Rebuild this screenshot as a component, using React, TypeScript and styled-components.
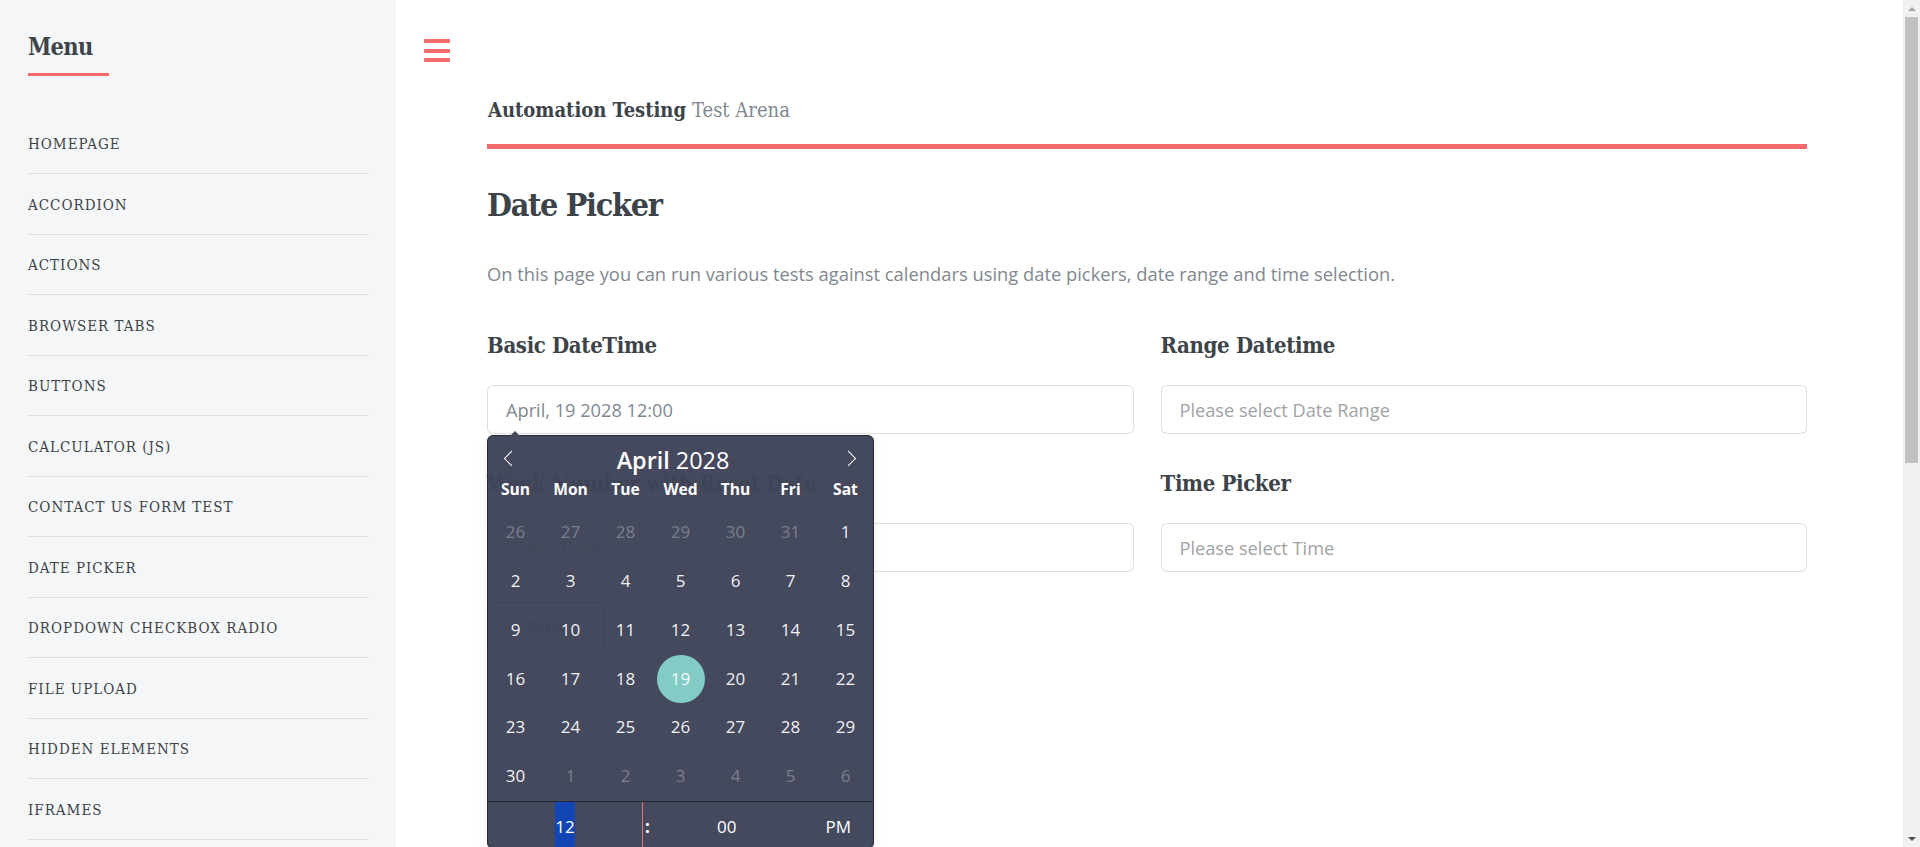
import React from "react";
import styled, { createGlobalStyle } from "styled-components";

const HEAD = `"DejaVu Serif Condensed", "DejaVu Serif", "Liberation Serif", serif`;
const BODY = `"Open Sans", "Noto Sans", sans-serif`;
const ACCENT = "#f56a6a";
const INK = "#3d4449";

const GlobalStyle = createGlobalStyle`
  * { box-sizing: border-box; }
  html, body { margin: 0; padding: 0; height: 100%; overflow: hidden; background: #ffffff; }
  body { font-family: ${BODY}; font-size: 18.2px; color: #7f888f; }
  #root { height: 100%; }
`;

const Page = styled.div`
  display: flex;
  width: 1920px;
  height: 847px;
  overflow: hidden;
`;

const Sidebar = styled.aside`
  flex: none;
  width: 396px;
  height: 100%;
  background: #f5f6f7;
  padding: 33px 27px 0 28px;
  overflow: hidden;
`;

const MenuTitle = styled.h2`
  display: inline-block;
  margin: 0 0 37px;
  padding: 0 16px 12px 0;
  border-bottom: 3px solid ${ACCENT};
  font-family: ${HEAD};
  font-stretch: condensed;
  font-weight: 700;
  font-size: 23.4px;
  letter-spacing: -0.7px;
  line-height: 28px;
  color: ${INK};
`;

const MenuList = styled.ul`
  list-style: none;
  margin: 0;
  padding: 0;
`;

const MenuItem = styled.li`
  height: 60px;
  display: flex;
  align-items: center;
  padding-top: 2px;
  font-family: ${HEAD};
  font-stretch: condensed;
  font-size: 15px;
  letter-spacing: 1px;
  text-transform: uppercase;
  color: ${INK};
  & + & {
    border-top: 1px solid rgba(210, 215, 217, 0.75);
    height: 60.5px;
  }
`;

const Main = styled.main`
  flex: 1;
  min-width: 0;
  padding: 39px 0 0 28px;
`;

const Toggle = styled.div`
  width: 26px;
  height: 23px;
  display: flex;
  flex-direction: column;
  justify-content: space-between;
`;

const ToggleBar = styled.span`
  display: block;
  height: 4px;
  border-radius: 1px;
  background: ${ACCENT};
`;

const Content = styled.div`
  width: 1320px;
  margin-left: 63px;
`;

const Header = styled.header`
  padding: 36px 0 22px 1px;
  border-bottom: 5px solid ${ACCENT};
`;

const Logo = styled.div`
  font-family: ${HEAD};
  font-stretch: condensed;
  font-size: 20px;
  line-height: 24px;
  color: #7f888f;
  strong {
    color: ${INK};
    font-weight: 700;
    margin-right: 6px;
  }
`;

const Title = styled.h1`
  margin: 36px 0 0;
  font-family: ${HEAD};
  font-stretch: condensed;
  font-weight: 700;
  font-size: 32px;
  letter-spacing: -1.3px;
  line-height: 40px;
  color: ${INK};
`;

const Lead = styled.p`
  margin: 34.6px 0 0;
  font-size: 18.35px;
  line-height: 28.6px;
`;

const Grid = styled.div`
  display: grid;
  grid-template-columns: 1fr 1fr;
  column-gap: 27px;
  margin-top: 43px;
`;

const Field = styled.div`
  padding-bottom: 35px;
`;

const FieldLabel = styled.h3`
  margin: 0 0 26px;
  font-family: ${HEAD};
  font-stretch: condensed;
  font-weight: 700;
  font-size: 22px;
  letter-spacing: -0.35px;
  line-height: 28px;
  color: ${INK};
`;

const InputWrap = styled.div`
  position: relative;
`;

const Input = styled.input`
  display: block;
  width: 100%;
  height: 49px;
  padding: 0 18px;
  border: 1px solid rgba(210, 215, 217, 0.75);
  border-radius: 6px;
  background: #ffffff;
  font-family: ${BODY};
  font-size: 18.2px;
  color: #7f888f;
  outline: none;
  &::placeholder {
    color: #9fa3a6;
  }
`;

const ResetButton = styled.div`
  display: inline-flex;
  align-items: center;
  justify-content: center;
  margin-top: 30px;
  width: 118px;
  height: 50px;
  border: 1px solid ${INK};
  border-radius: 6px;
  font-family: ${HEAD};
  font-size: 15px;
  color: ${INK};
`;

/* ---------- calendar ---------- */

const Calendar = styled.div`
  position: absolute;
  top: calc(100% + 2px);
  left: 1px;
  z-index: 10;
  width: 385px;
  background: #3f4458;
  border-radius: 5px;
  opacity: 0.97;
  box-shadow: 1px 0 0 #20222c, -1px 0 0 #20222c, 0 1px 0 #20222c, 0 -1px 0 #20222c,
    0 3px 13px rgba(0, 0, 0, 0.08);
  font-family: ${BODY};
  color: #ffffff;
  &::before {
    content: "";
    position: absolute;
    left: 22px;
    top: -10px;
    border: 5px solid transparent;
    border-bottom-color: #3f4458;
  }
`;

const MonthsRow = styled.div`
  display: grid;
  grid-template-columns: 40px 1fr 40px;
  height: 39px;
`;

const NavArrow = styled.div<{ $side: "prev" | "next" }>`
  padding-top: 14px;
  padding-left: ${(p) => (p.$side === "prev" ? "11.5px" : "0")};
  padding-right: ${(p) => (p.$side === "next" ? "13.5px" : "0")};
  justify-self: ${(p) => (p.$side === "prev" ? "start" : "end")};
  svg {
    display: block;
    width: 17px;
    height: 17px;
    fill: #ffffff;
  }
`;

const MonthTitle = styled.div`
  padding: 10px 15px 0 0;
  text-align: center;
  font-size: 23.4px;
  line-height: 28px;
  font-weight: 400;
  b {
    font-weight: 600;
  }
`;

const Weekdays = styled.div`
  display: grid;
  grid-template-columns: repeat(7, 1fr);
  height: 28px;
  line-height: 28px;
  font-size: 15.6px;
  font-weight: 700;
  text-align: center;
`;

const Days = styled.div`
  display: grid;
  grid-template-columns: repeat(7, 1fr);
  grid-auto-rows: 48.8px;
  justify-items: center;
  padding-top: 5px;
`;

const Day = styled.span<{ $muted?: boolean; $selected?: boolean }>`
  width: 48px;
  height: 48.8px;
  line-height: 48.8px;
  text-align: center;
  border-radius: 50%;
  font-size: 17px;
  color: ${(p) => (p.$muted ? "rgba(255,255,255,0.3)" : "rgba(255,255,255,0.95)")};
  background: ${(p) => (p.$selected ? "#80cbc4" : "transparent")};
`;

const TimeRow = styled.div`
  display: flex;
  height: 47px;
  border-top: 1px solid #20222c;
  font-size: 17px;
  line-height: 50px;
  color: #ffffff;
  overflow: hidden;
  border-radius: 0 0 5px 5px;
`;

const TimeCell = styled.div<{ $w: string }>`
  width: ${(p) => p.$w};
  text-align: center;
`;

const TimeSep = styled.div`
  width: 2%;
  border-left: 1px solid ${ACCENT};
  font-weight: 700;
  padding-left: 2px;
`;

const HourSel = styled.span`
  display: inline-block;
  height: 47px;
  padding: 0 0.5px;
  background: #0b41b2;
  vertical-align: top;
`;

/* ---------- scrollbar ---------- */

const Scrollbar = styled.div`
  flex: none;
  width: 17px;
  height: 100%;
  background: #f1f1f1;
  display: flex;
  flex-direction: column;
`;

const ScrollArrow = styled.div<{ $dir: "up" | "down" }>`
  height: 17px;
  display: flex;
  align-items: center;
  justify-content: center;
  &::after {
    content: "";
    border: 4px solid transparent;
    ${(p) =>
      p.$dir === "up"
        ? "border-bottom-color: #a3a3a3; margin-top: -4px;"
        : "border-top-color: #505050; margin-top: 4px;"}
  }
`;

const ScrollTrack = styled.div`
  flex: 1;
  padding: 0 2px;
`;

const ScrollThumb = styled.div`
  height: 446px;
  background: #c1c1c1;
`;

const menu = [
  "Homepage",
  "Accordion",
  "Actions",
  "Browser Tabs",
  "Buttons",
  "Calculator (JS)",
  "Contact Us Form Test",
  "Date Picker",
  "Dropdown Checkbox Radio",
  "File Upload",
  "Hidden Elements",
  "Iframes",
  "Javascript Alerts",
];

const weekdays = ["Sun", "Mon", "Tue", "Wed", "Thu", "Fri", "Sat"];

type Cell = { n: number; muted?: boolean; selected?: boolean };
const cells: Cell[] = [
  ...[26, 27, 28, 29, 30, 31].map((n) => ({ n, muted: true })),
  ...Array.from({ length: 30 }, (_, i) => ({ n: i + 1, selected: i + 1 === 19 })),
  ...[1, 2, 3, 4, 5, 6].map((n) => ({ n, muted: true })),
];

const PrevIcon = () => (
  <svg viewBox="0 0 17 17">
    <path d="M5.207 8.471l7.146-7.147-0.707-0.707-7.853 7.854 7.854 7.853 0.707-0.707-7.147-7.146z" />
  </svg>
);

const NextIcon = () => (
  <svg viewBox="0 0 17 17">
    <path d="M13.207 8.472l-7.854 7.854-0.707-0.707 7.146-7.146-7.146-7.148 0.707-0.707 7.854 7.854z" />
  </svg>
);

const DateCalendar = () => (
  <Calendar>
    <MonthsRow>
      <NavArrow $side="prev">
        <PrevIcon />
      </NavArrow>
      <MonthTitle>
        <b>April</b> 2028
      </MonthTitle>
      <NavArrow $side="next">
        <NextIcon />
      </NavArrow>
    </MonthsRow>
    <Weekdays>
      {weekdays.map((d) => (
        <span key={d}>{d}</span>
      ))}
    </Weekdays>
    <Days>
      {cells.map((c, i) => (
        <Day key={i} $muted={c.muted} $selected={c.selected}>
          {c.n}
        </Day>
      ))}
    </Days>
    <TimeRow>
      <TimeCell $w="40%">
        <HourSel>12</HourSel>
      </TimeCell>
      <TimeSep>:</TimeSep>
      <TimeCell $w="40%">00</TimeCell>
      <TimeCell $w="18%">PM</TimeCell>
    </TimeRow>
  </Calendar>
);

export default function App() {
  return (
    <>
      <GlobalStyle />
      <Page>
        <Sidebar>
          <MenuTitle>Menu</MenuTitle>
          <MenuList>
            {menu.map((m) => (
              <MenuItem key={m}>{m}</MenuItem>
            ))}
          </MenuList>
        </Sidebar>
        <Main>
          <Toggle>
            <ToggleBar />
            <ToggleBar />
            <ToggleBar />
          </Toggle>
          <Content>
            <Header>
              <Logo>
                <strong>Automation Testing</strong>Test Arena
              </Logo>
            </Header>
            <Title>Date Picker</Title>
            <Lead>
              On this page you can run various tests against calendars using date pickers, date range
              and time selection.
            </Lead>
            <Grid>
              <Field>
                <FieldLabel>Basic DateTime</FieldLabel>
                <InputWrap>
                  <Input readOnly value="April, 19 2028 12:00" />
                  <DateCalendar />
                </InputWrap>
              </Field>
              <Field>
                <FieldLabel>Range Datetime</FieldLabel>
                <InputWrap>
                  <Input readOnly placeholder="Please select Date Range" />
                </InputWrap>
              </Field>
              <Field>
                <FieldLabel>Week Number with Reset Date</FieldLabel>
                <InputWrap>
                  <Input readOnly placeholder="Select Date.." />
                </InputWrap>
                <ResetButton>Reset</ResetButton>
              </Field>
              <Field>
                <FieldLabel>Time Picker</FieldLabel>
                <InputWrap>
                  <Input readOnly placeholder="Please select Time" />
                </InputWrap>
              </Field>
            </Grid>
          </Content>
        </Main>
        <Scrollbar>
          <ScrollArrow $dir="up" />
          <ScrollTrack>
            <ScrollThumb />
          </ScrollTrack>
          <ScrollArrow $dir="down" />
        </Scrollbar>
      </Page>
    </>
  );
}
